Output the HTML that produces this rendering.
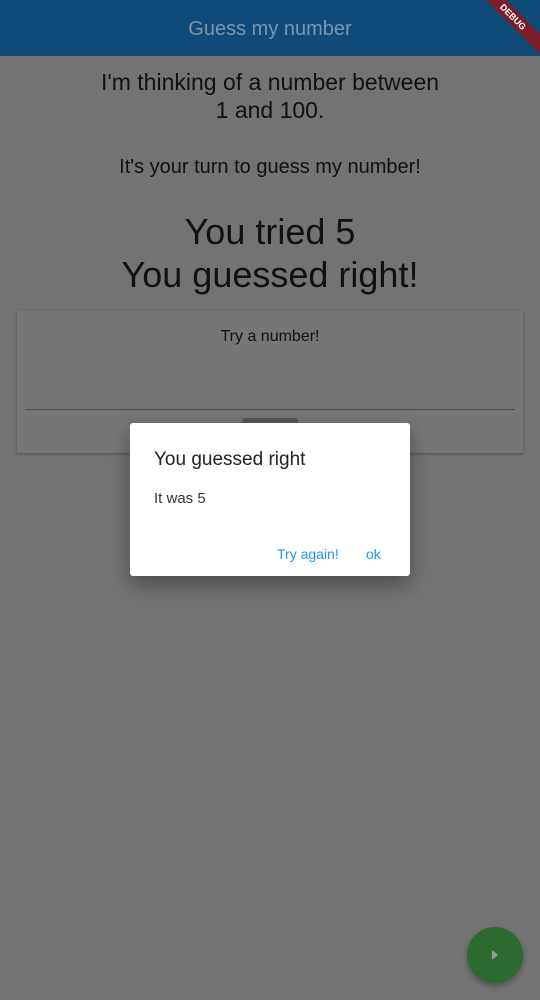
<!DOCTYPE html>
<html><head><style>
body{margin:0;width:540px;height:1000px;background:#737373;font-family:"Liberation Sans",sans-serif;position:relative;overflow:hidden}
.bar{position:absolute;left:0;top:0;width:540px;height:56px;background:#0f4a78;color:#7f96aa;font-size:20px;text-align:center;line-height:58px}
.rib{position:absolute;right:-28px;top:10px;width:110px;height:14px;background:#7a1f2a;transform:rotate(45deg);color:#fff;font-size:9px;font-weight:bold;text-align:center;line-height:14px}
.c{position:absolute;left:0;width:540px;text-align:center;color:#111}
.card{position:absolute;left:17px;top:311px;width:506px;height:142px;background:#767676;box-shadow:0 1px 3px rgba(0,0,0,.3)}
.dlg{position:absolute;left:130px;top:423px;width:280px;height:153px;background:#fff;border-radius:3px;box-shadow:0 8px 20px rgba(0,0,0,.35)}
.fab{position:absolute;left:467px;top:927px;width:56px;height:56px;border-radius:50%;background:#2c6a30;box-shadow:0 3px 6px rgba(0,0,0,.3)}
</style></head><body>
<div class="bar">Guess my number</div>
<div class="rib">DEBUG</div>
<div class="c" style="top:68px;font-size:23px;line-height:28px">I'm thinking of a number between<br>1 and 100.</div>
<div class="c" style="top:156px;font-size:20px">It's your turn to guess my number!</div>
<div class="c" style="top:210px;font-size:36px;line-height:43px">You tried 5<br>You guessed right!</div>
<div class="card">
<div style="position:absolute;top:17px;width:100%;text-align:center;font-size:16px;color:#111">Try a number!</div>
<div style="position:absolute;left:8px;right:8px;top:98px;height:1px;background:#4a4a4a"></div>
<div style="position:absolute;left:225px;top:107px;width:56px;height:6px;background:#555;border-radius:3px 3px 0 0"></div>
</div>
<div class="dlg">
<div style="position:absolute;left:24px;top:26px;font-size:19px;color:#222">You guessed right</div>
<div style="position:absolute;left:24px;top:67px;font-size:15px;color:#333">It was 5</div>
<div style="position:absolute;left:147px;top:123px;font-size:14px;color:#2196f3">Try again!</div>
<div style="position:absolute;left:236px;top:123px;font-size:14px;color:#2196f3">ok</div>
</div>
<div class="fab"><div style="position:absolute;left:25px;top:23px;border-left:6px solid #999;border-top:5px solid transparent;border-bottom:5px solid transparent"></div></div>
</body></html>
